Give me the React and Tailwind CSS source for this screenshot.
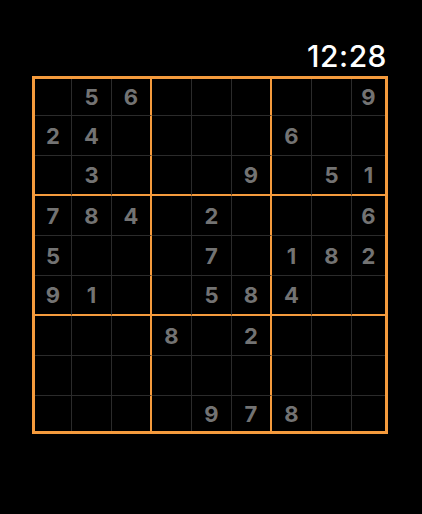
import React from "react";

const grid = [
  "056000009",
  "240000600",
  "030009051",
  "784020006",
  "500070182",
  "910058400",
  "000802000",
  "000000000",
  "000097800",
];

function cellClass(r, c) {
  let cls = "flex items-center justify-center ";
  if (c === 2 || c === 5) cls += "border-r-2 border-r-[#f59b3d] ";
  else if (c < 8) cls += "border-r border-r-[#2b2b2b] ";
  if (r === 2 || r === 5) cls += "border-b-2 border-b-[#f59b3d] ";
  else if (r < 8) cls += "border-b border-b-[#2b2b2b] ";
  return cls;
}

export default function App() {
  return (
    <div className="w-[422px] h-[514px] bg-black overflow-hidden" style={{ fontFamily: "Inter, 'Liberation Sans', sans-serif" }}>
      <div className="h-[76px] flex items-end justify-end pr-[35px] pb-[3px]">
        <span className="text-white text-[30px] leading-[34px] font-medium tracking-[0.5px]">12:28</span>
      </div>
      <div className="ml-[32px] w-[356px] h-[358px] border-[3px] border-[#f59b3d]">
        <div className="grid grid-cols-[37px_repeat(7,40px)_33px] grid-rows-[37px_repeat(7,40px)_35px] w-full h-full">
          {grid.map((row, r) =>
            row.split("").map((d, c) => (
              <div key={r + "-" + c} className={cellClass(r, c)}>
                {d !== "0" && (
                  <span className="text-[#737373] text-[22px] leading-none font-bold">{d}</span>
                )}
              </div>
            ))
          )}
        </div>
      </div>
    </div>
  );
}
